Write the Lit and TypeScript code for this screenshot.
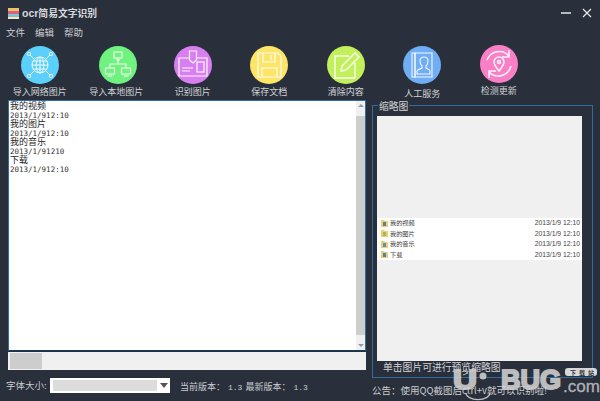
import { LitElement, html, css, svg } from "lit";
import { customElement } from "lit/decorators.js";

const icons = [
  svg`<g fill="none" stroke="#fff" stroke-width="1" opacity=".9"><circle cx="19" cy="19" r="8"/><ellipse cx="19" cy="19" rx="3.800" ry="8"/><path d="M19 11v16M11 19h16M12.200 15h13.600M12.200 23h13.600"/><path d="M13 13L9 9M25 13l4-4M13 25l-4 4M25 25l4 4"/><circle cx="8" cy="8" r="1.700"/><circle cx="30" cy="8" r="1.700"/><circle cx="8" cy="30" r="1.700"/><circle cx="30" cy="30" r="1.700"/></g>`,
  svg`<g fill="none" stroke="#fff" stroke-width="1.100" opacity=".9"><rect x="15" y="6" width="8" height="6"/><path d="M17 14h4M19 12v6M11 22v-4h16v4"/><rect x="6.500" y="22" width="9" height="6"/><rect x="22.500" y="22" width="9" height="6"/><path d="M8.500 30h5M24.500 30h5"/></g>`,
  svg`<g fill="none" stroke="#fff" stroke-width="1.200" opacity=".92"><path d="M15 12H5v18h28V12H23"/><path d="M15.500 5h7v9l-3.500 3-3.500-3z"/><rect x="23" y="16" width="7" height="10"/><path d="M8 22h11M8 25h8"/></g>`,
  svg`<g fill="none" stroke="#fff" stroke-width="1.200" opacity=".92"><path d="M8 7h20l3 3v21H8z"/><path d="M13 7v9h12V7M21 9v5"/><path d="M12 31v-9h15v9"/></g>`,
  svg`<g fill="none" stroke="#fff" stroke-width="1.400" opacity=".92"><path d="M22 10H8v22h20V17"/><path d="M14 25l1-5L28 7l4 4-13 13z"/></g>`,
  svg`<g fill="none" stroke="#fff" stroke-width="1.100" opacity=".92"><path d="M12 7h17v24H12z"/><path d="M9 7h3v24H9z"/><path d="M14 28v-3c1-2 4-2 5-3v-2c-1-1-2-3-2-5 0-3 2-4 4-4s4 1 4 4c0 2-1 4-2 5v2c1 1 3 1 4 3v3z"/></g>`,
  svg`<g fill="none" stroke="#fff" stroke-width="1.500" opacity=".92"><path d="M7 15A13 13 0 0 1 29 11"/><path d="M31 21A13 13 0 0 1 9 27"/><path d="M29 5v7h-7M9 33v-7h7"/><path d="M19 26c-3-4-5-6-5-9a5 5 0 0 1 10 0c0 3-2 5-5 9z"/><circle cx="19" cy="17" r="1.500"/></g>`,
];

const tools = [
  { label: "导入网络图片", color: "#5ad0fa", cls: "" },
  { label: "导入本地图片", color: "#6ff27f", cls: "nudge" },
  { label: "识别图片", color: "#d77ff0", cls: "" },
  { label: "保存文档", color: "#fde56a", cls: "" },
  { label: "清除内容", color: "#c3f05c", cls: "" },
  { label: "人工服务", color: "#6fadf5", cls: "low" },
  { label: "检测更新", color: "#f97fc6", cls: "high" },
];

const entries: [string, string][] = [
  ["我的视频", "2013/1/912:10"],
  ["我的图片", "2013/1/912:10"],
  ["我的音乐", "2013/1/91210"],
  ["下载", "2013/1/912:10"],
];

const thumbs = [
  ["我的视频", "#5b7f9c"],
  ["我的图片", "#a9b36a"],
  ["我的音乐", "#5a8fd0"],
  ["下载", "#3f86c9"],
];

@customElement("app-root")
export class AppRoot extends LitElement {
  static styles = css`
    :host {
      display: block;
      position: relative;
      width: 600px;
      height: 401px;
      overflow: hidden;
      background: #2a303b;
      color: #d4d7da;
      font-family: "Noto Sans CJK SC", "Liberation Sans", sans-serif;
      font-size: 9px;
    }
    .title { display: flex; align-items: center; height: 26px; padding: 0 8px; }
    .logo { width: 11px; height: 11px; margin-right: 3px; display: block; }
    .name { font-size: 9.800px; font-weight: 700; line-height: 12px; color: #d6d9dc; }
    .ocr { font-family: "Liberation Sans", sans-serif; font-size: 10.500px; }
    .winbtns { margin-left: auto; display: flex; gap: 11px; }
    .winbtns svg { display: block; }
    .menu { display: flex; gap: 10px; height: 18px; padding-left: 6px; font-size: 9.500px; line-height: 12px; color: #c9ccd0; }
    .tools { display: flex; height: 56px; padding-left: 1.500px; }
    .tool { width: 76.500px; flex: none; display: flex; flex-direction: column; align-items: center; }
    .circle { width: 38px; height: 38px; border-radius: 50%; margin-top: 2px; display: block; }
    .tool span { margin-top: 2px; line-height: 12px; color: #d0d3d6; white-space: nowrap; }
    .tool.nudge .circle { margin-left: 3px; }
    .tool.low span { margin-top: 4px; }
    .tool.high { margin-top: -1px; }
    .main { display: flex; padding-left: 8px; }
    .left { width: 358px; flex: none; }
    .edit {
      height: 251px;
      box-sizing: border-box;
      background: #fff;
      border: 1px solid #2e6fa8;
      border-bottom: 1px solid #123d66;
      display: flex;
      color: #222;
    }
    .lines { flex: 1; padding: 0 0 0 1px; }
    .cjk { font-size: 9px; line-height: 9px; height: 9px; color: #1f1f1f; }
    .date { font-family: "DejaVu Sans Mono", monospace; font-size: 7.500px; line-height: 11px; height: 9px; color: #333; }
    .vthumb { width: 9px; flex: 1; background: #cdcdcd; margin: 9px 0; }
    .arrow-up { width: 0; height: 0; border: 3px solid transparent; border-bottom: 3px solid #9a9a9a; border-top: 0; margin-top: 3px; }
    .arrow-down { width: 0; height: 0; border: 3px solid transparent; border-top: 3px solid #9a9a9a; border-bottom: 0; margin-bottom: 3px; }
    .vwrap { width: 9px; background: #f0f0f0; display: flex; flex-direction: column; justify-content: space-between; align-items: center; flex: none; }
    .hbar { height: 18px; margin-top: 1px; background: #f0f0f0; padding: 1px 2px; box-sizing: border-box; }
    .hthumb { width: 32px; height: 16px; background: #cdcdcd; }
    .group {
      margin-left: 6px;
      margin-top: 5px;
      width: 221px;
      height: 273px;
      box-sizing: border-box;
      border: 1px solid #2f6d9e;
      position: relative;
      padding: 10px 10px 0 4px;
    }
    .legend {
      position: absolute;
      top: -6px;
      left: 5px;
      padding: 0 1px;
      background: #2a303b;
      font-size: 9.800px;
      line-height: 12px;
      color: #d0d3d6;
    }
    .pic { height: 245px; background: #f0f0f0; display: flex; flex-direction: column; justify-content: center; }
    .rows { background: #fff; height: 42px; }
    .tr { display: flex; align-items: center; height: 10.500px; padding: 0 2px 0 4px; font-size: 6.200px; color: #3c3c3c; }
    .tr svg { width: 7px; height: 8px; margin-right: 2px; flex: none; }
    .tr b { font-weight: 400; margin-left: auto; font-family: "Liberation Sans", sans-serif; font-size: 6.800px; color: #444; }
    .hint { font-size: 9.800px; line-height: 12px; margin: 0 0 0 6px; color: #d0d3d6; white-space: nowrap; }
    .foot { display: flex; align-items: center; padding-left: 6px; height: 14px; font-size: 9.500px; color: #c9ccd0; position: relative; }
    .size { width: 44px; flex: none; white-space: nowrap; }
    .combo { width: 120px; height: 15px; background: #fff; display: flex; align-items: center; box-sizing: border-box; padding: 2px 0 2px 3px; flex: none; }
    .combo i { flex: 1; height: 11px; background: #dcdcdc; }
    .combo u { width: 13px; display: flex; justify-content: center; }
    .combo u::after { content: ""; border: 4px solid transparent; border-top: 5px solid #555; border-bottom: 0; }
    .ver { margin-left: 10px; margin-top: 3px; font-size: 9px; white-space: nowrap; }
    .ver em { font-style: normal; font-family: "Liberation Mono", monospace; font-size: 8px; margin: 0 3px; }
    .notice { position: absolute; left: 372px; top: 6px; font-size: 9.500px; line-height: 12px; white-space: nowrap; }
    .mark { position: absolute; left: 446px; top: 362px; width: 154px; height: 39px; display: block; opacity: .86; }
    .mark text { font-family: "Liberation Sans", sans-serif; }
    .heavy { font-weight: 700; fill: #d4d4d4; stroke: #d4d4d4; stroke-width: 2px; }
    .dotcom { fill: #c4c7ca; stroke: #c4c7ca; stroke-width: .3px; }
    .mark text.tag { font-family: "Noto Sans CJK SC", sans-serif; font-weight: 700; fill: #333; letter-spacing: 3px; }
  `;

  render() {
    return html`
      <div class="title">
        <svg class="logo" viewBox="0 0 11 11">
          <rect width="11" height="3" fill="#e9c46a" />
          <rect y="3" width="11" height="3" fill="#e0607a" />
          <rect y="6" width="11" height="2.500" fill="#7cc4d8" />
          <rect y="8.500" width="11" height="2.500" fill="#f0e8d0" />
        </svg>
        <div class="name"><span class="ocr">ocr</span>简易文字识别</div>
        <div class="winbtns">
          <svg width="10" height="10" viewBox="0 0 10 10"><path d="M0 5h10" stroke="#e8e8e8" stroke-width="1.500" /></svg>
          <svg width="10" height="10" viewBox="0 0 10 10"><path d="M1 1l8 8M9 1l-8 8" stroke="#e8e8e8" stroke-width="1.200" /></svg>
        </div>
      </div>
      <div class="menu"><span>文件</span><span>编辑</span><span>帮助</span></div>
      <div class="tools">
        ${tools.map(
          (t, i) => html`<div class="tool ${t.cls}">
            <svg class="circle" viewBox="0 0 38 38" style="background:${t.color}">${icons[i]}</svg>
            <span>${t.label}</span>
          </div>`
        )}
      </div>
      <div class="main">
        <div class="left">
          <div class="edit">
            <div class="lines">
              ${entries.map(
                ([a, b]) => html`<div class="cjk">${a}</div><div class="date">${b}</div>`
              )}
            </div>
            <div class="vwrap">
              <div class="arrow-up"></div>
              <div class="vthumb"></div>
              <div class="arrow-down"></div>
            </div>
          </div>
          <div class="hbar"><div class="hthumb"></div></div>
        </div>
        <div class="group">
          <div class="legend">缩略图</div>
          <div class="pic">
            <div class="rows">
              ${thumbs.map(
                ([n, c]) => html`<div class="tr">
                  <svg viewBox="0 0 7 8">
                    <path d="M0 1h3l1 1h3v6H0z" fill="#f0cf6a" />
                    <rect x="2" y="3" width="3" height="4" fill="${c}" />
                  </svg>
                  <span>${n}</span><b>2013/1/9 12:10</b>
                </div>`
              )}
            </div>
          </div>
          <div class="hint">单击图片可进行预览缩略图</div>
        </div>
      </div>
      <div class="foot">
        <span class="size">字体大小:</span>
        <div class="combo"><i></i><u></u></div>
        <div class="ver">当前版本：<em>1.3</em>最新版本：<em>1.3</em></div>
        <div class="notice">公告：使用QQ截图后ctrl+v就可以识别啦!</div>
      </div>
      <svg class="mark" viewBox="0 0 154 39">
        <text class="heavy" x="7" y="27" font-size="27" textLength="24" lengthAdjust="spacingAndGlyphs">U</text>
        <circle cx="37" cy="14" r="3.500" fill="#d4d4d4" />
        <path d="M20 31a11 6 0 0 0 24 0" fill="none" stroke="#d8d8d8" stroke-width="1.200" />
        <path d="M17 8l5 3-5 2" fill="none" stroke="#d8d8d8" stroke-width="1" />
        <text class="heavy" x="55" y="27" font-size="27">BUG</text>
        <text class="dotcom" x="117" y="30" font-size="17">.com</text>
        <rect x="119" y="6" width="32" height="8" rx="3" fill="#f4f4f4" />
        <text class="tag" x="124" y="12.500" font-size="6">下载站</text>
      </svg>
    `;
  }
}
